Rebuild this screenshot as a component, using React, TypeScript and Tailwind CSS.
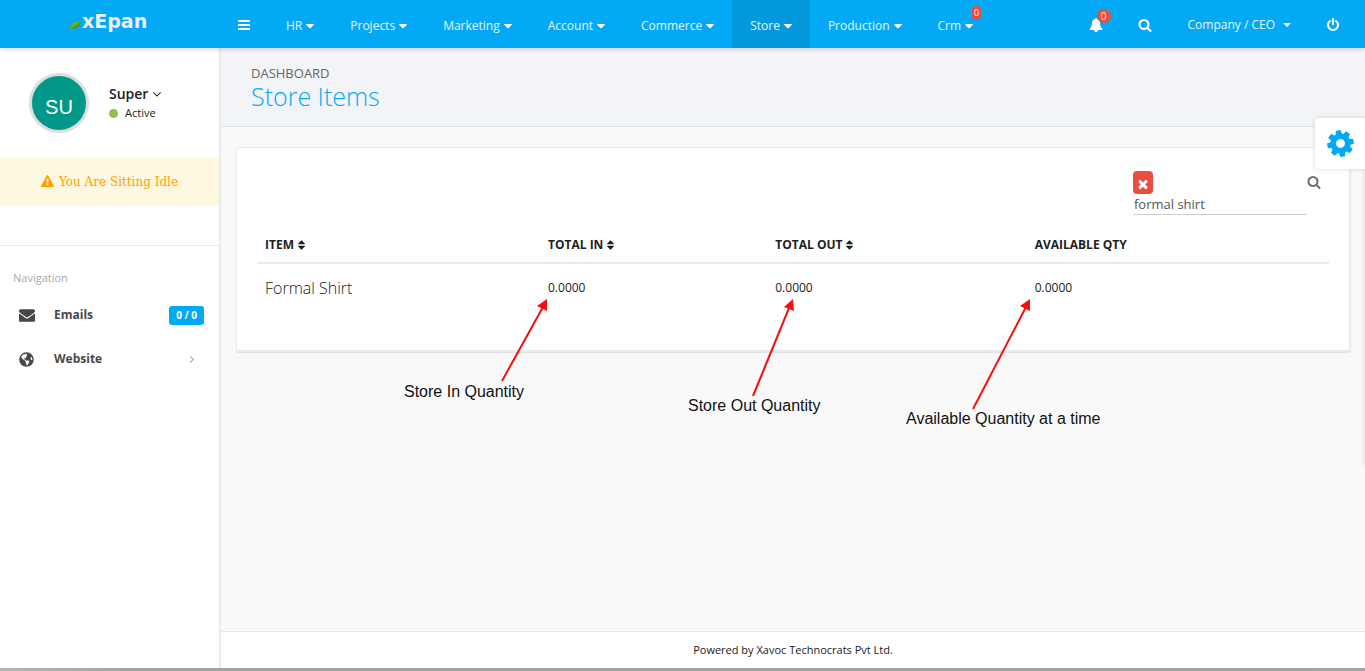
import type { ReactNode } from "react";
import { FaGlobeAmericas } from "react-icons/fa";

const glyphs = {
  bars: "M1664 1344v128q0 26-19 45t-45 19h-1408q-26 0-45-19t-19-45v-128q0-26 19-45t45-19h1408q26 0 45 19t19 45zm0-512v128q0 26-19 45t-45 19h-1408q-26 0-45-19t-19-45v-128q0-26 19-45t45-19h1408q26 0 45 19t19 45zm0-512v128q0 26-19 45t-45 19h-1408q-26 0-45-19t-19-45v-128q0-26 19-45t45-19h1408q26 0 45 19t19 45z",
  caret: "M1408 704q0 26-19 45l-448 448q-19 19-45 19t-45-19l-448-448q-19-19-19-45t19-45 45-19h896q26 0 45 19t19 45z",
  bell: "M912 1696q0-16-16-16-59 0-101.5-42.5t-42.5-101.5q0-16-16-16t-16 16q0 73 51.5 124.5t124.5 51.5q16 0 16-16zm816-288q0 52-38 90t-90 38h-448q0 106-75 181t-181 75-181-75-75-181h-448q-52 0-90-38t-38-90q50-42 91-88t85-119.5 74.5-158.5 50-206 19.5-260q0-152 117-282.5t307-158.5q-8-19-8-39 0-40 28-68t68-28 68 28 28 68q0 20-8 39 190 28 307 158.5t117 282.5q0 139 19.5 260t50 206 74.5 158.5 85 119.5 91 88z",
  search: "M1216 832q0-185-131.5-316.5t-316.5-131.5-316.5 131.5-131.5 316.5 131.5 316.5 316.5 131.5 316.5-131.5 131.5-316.5zm512 832q0 52-38 90t-90 38q-54 0-90-38l-343-342q-179 124-399 124-143 0-273.5-55.5t-225-150-150-225-55.5-273.5 55.5-273.5 150-225 225-150 273.5-55.5 273.5 55.5 225 150 150 225 55.5 273.5q0 220-124 399l343 343q37 37 37 90z",
  power: "M1664 896q0 156-61 298t-164 245-245 164-298 61-298-61-245-164-164-245-61-298q0-182 80.5-343t226.5-270q43-32 95.5-25t83.5 50q32 42 24.5 94.5t-49.5 84.5q-98 74-151.5 181t-53.5 228q0 104 40.5 198.5t109.5 163.5 163.5 109.5 198.5 40.5 198.5-40.5 163.5-109.5 109.5-163.5 40.5-198.5q0-121-53.5-228t-151.5-181q-42-32-49.5-84.5t24.5-94.5q31-43 84-50t95 25q146 109 226.5 270t80.5 343zm-640-768v640q0 52-38 90t-90 38-90-38-38-90v-640q0-52 38-90t90-38 90 38 38 90z",
  cog: "M1152 896q0-106-75-181t-181-75-181 75-75 181 75 181 181 75 181-75 75-181zm512-109v222q0 12-8 23t-20 13l-185 28q-19 54-39 91 35 50 107 138 10 12 10 25t-9 23q-27 37-99 108t-94 71q-12 0-26-9l-138-108q-44 23-91 38-16 136-29 186-7 28-36 28h-222q-14 0-24.5-8.5t-11.5-21.5l-28-184q-49-16-90-37l-141 107q-10 9-25 9-14 0-25-11-126-114-165-168-7-10-7-23 0-12 8-23 15-21 51-66.5t54-70.5q-27-50-41-99l-183-27q-13-2-21-12.5t-8-23.5v-222q0-12 8-23t19-13l186-28q14-46 39-92-40-57-107-138-10-12-10-24 0-10 9-23 26-36 98.5-107.5t94.5-71.5q13 0 26 10l138 107q44-23 91-38 16-136 29-186 7-28 36-28h222q14 0 24.5 8.5t11.5 21.5l28 184q49 16 90 37l142-107q9-9 24-9 13 0 25 10 129 119 165 170 7 8 7 22 0 12-8 23-15 21-51 66.5t-54 70.5q26 50 41 98l183 28q13 2 21 12.5t8 23.5z",
  envelope: "M1792 710v794q0 66-47 113t-113 47h-1472q-66 0-113-47t-47-113v-794q44 49 101 87 362 246 497 345 57 42 92.5 65.5t94.5 48 110 24.5h2q51 0 110-24.5t94.5-48 92.5-65.5q170-123 498-345 57-39 100-87zm0-294q0 79-49 151t-122 123q-376 261-468 325-10 7-42.5 31t-54 38.5-52 32.5-57.5 27-50 9h-2q-23 0-50-9t-57.5-27-52-32.5-54-38.5-42.5-31q-91-64-262-182.5t-205-142.5q-62-42-117-115.5t-55-136.5q0-78 41.5-130t118.5-52h1472q65 0 112.5 47t47.5 113z",
  warning: "M1024 1375v-190q0-14-9.5-23.5t-22.5-9.5h-192q-13 0-22.5 9.5t-9.5 23.5v190q0 14 9.5 23.5t22.5 9.5h192q13 0 22.5-9.5t9.5-23.5zm-2-374l18-459q0-12-10-19-13-11-24-11h-220q-11 0-24 11-10 7-10 21l17 457q0 10 10 16.5t24 6.5h185q14 0 23.5-6.5t10.5-16.5zm-14-934l768 1408q35 63-2 126-17 29-46.5 46t-63.5 17h-1536q-34 0-63.5-17t-46.5-46q-37-63-2-126l768-1408q17-31 47-49t65-18 65 18 47 49z",
  times: "M1490 1322q0 40-28 68l-136 136q-28 28-68 28t-68-28l-294-294-294 294q-28 28-68 28t-68-28l-136-136q-28-28-28-68t28-68l294-294-294-294q-28-28-28-68t28-68l136-136q28-28 68-28t68 28l294 294 294-294q28-28 68-28t68 28l136 136q28 28 28 68t-28 68l-294 294 294 294q28 28 28 68z",
  angleRight: "M1171 960q0 13-10 23l-466 466q-10 10-23 10t-23-10l-50-50q-10-10-10-23t10-23l393-393-393-393q-10-10-10-23t10-23l50-50q10-10 23-10t23 10l466 466q10 10 10 23z",
  angleDown: "M1395 736q0 13-10 23l-466 466q-10 10-23 10t-23-10l-466-466q-10-10-10-23t10-23l50-50q10-10 23-10t23 10l393 393 393-393q10-10 23-10t23 10l50 50q10 10 10 23z",
  sort: "M1408 1088q0 26-19 45l-448 448q-19 19-45 19t-45-19l-448-448q-19-19-19-45t19-45 45-19h896q26 0 45 19t19 45zm0-384q0 26-19 45t-45 19h-896q-26 0-45-19t-19-45 19-45l448-448q19-19 45-19t45 19l448 448q19 19 19 45z",
};

function Glyph({ name, className, box = "0 0 1792 1792" }: { name: keyof typeof glyphs; className: string; box?: string }) {
  return (
    <svg viewBox={box} fill="currentColor" aria-hidden="true" className={className}>
      <path d={glyphs[name]} />
    </svg>
  );
}

const menu = ["HR", "Projects", "Marketing", "Account", "Commerce", "Store", "Production", "Crm"];

function TopBar() {
  return (
    <header className="relative z-10 flex h-12 items-stretch bg-[#03a9f5] text-[12px] text-[#e6f6fe] shadow-[0_1px_5px_rgba(0,0,0,0.18)]">
      <a href="#home" className="flex w-[220px] shrink-0 items-center pb-[6px] pl-[69px]" aria-label="xEpan">
        <svg viewBox="0 0 13 12" className="mt-2 h-3 w-[13px]" aria-hidden="true">
          <path d="M1 10.500C1 5 4 3 11.500 2C12 6 9 10 2.500 9.500L1 11Z" fill="#6fae1c" />
          <path d="M2.500 9C5 8 9 6 11.500 2C12 6 9 10 2.500 9.500Z" fill="#4a9412" />
        </svg>
        <span className="font-['DejaVu_Sans',sans-serif] text-[19px] font-bold leading-6 text-[#f1eef0]">xEpan</span>
      </a>
      <button className="flex w-12 items-center justify-center text-white" aria-label="Toggle menu">
        <Glyph name="bars" className="mt-0.5 size-[14px]" />
      </button>
      <nav className="flex">
        {menu.map((label) => (
          <a
            key={label}
            href={`#${label}`}
            className={`relative flex items-center gap-1 px-[18px] pt-1 ${label === "Store" ? "bg-[#0499dd]" : ""}`}
          >
            {label}
            <Glyph name="caret" box="384 0 1024 1792" className="h-[14px] w-2 text-white" />
            {label === "Crm" && (
              <span className="absolute right-[10px] top-[6px] rounded bg-[#e84e40] px-[2px] text-[9px] leading-[14px]">0</span>
            )}
          </a>
        ))}
      </nav>
      <div className="ml-auto flex items-stretch">
        <button className="relative flex w-12 items-center justify-center text-white" aria-label="Notifications">
          <Glyph name="bell" className="mt-0.5 size-[14px]" />
          <span className="absolute right-[9px] top-[9px] size-[14px] rounded-full bg-[#e84e40] text-center text-[10px] leading-[14px] text-[#fde5e2]">0</span>
        </button>
        <button className="flex w-[50px] items-center justify-center text-white" aria-label="Search">
          <Glyph name="search" className="mt-0.5 size-[14px]" />
        </button>
        <button className="flex items-center gap-2 px-[18px] pt-px">
          Company / CEO
          <span className="border-x-4 border-t-4 border-x-transparent border-t-white" />
        </button>
        <button className="mr-2 flex w-12 items-center justify-center text-white" aria-label="Log out">
          <Glyph name="power" className="mt-px size-[14px]" />
        </button>
      </div>
    </header>
  );
}

function Sidebar() {
  return (
    <aside className="flex w-[221px] shrink-0 flex-col border-r-2 border-[#e7ebee] bg-white">
      <div className="flex h-[110px] items-center gap-5 pl-[29px]">
        <div className="flex size-[60px] items-center justify-center rounded-full border-[3px] border-[#dedede] bg-[#009888] pt-2 font-['Liberation_Sans',sans-serif] text-[20px] text-white">
          SU
        </div>
        <div>
          <button className="flex items-center gap-0.5 text-[14px] font-semibold leading-5 text-[#212121]">
            Super
            <Glyph name="angleDown" className="size-[14px]" />
          </button>
          <div className="flex items-center gap-[7px] text-[11px] leading-[18px] text-[#212121]">
            <span className="size-[9px] rounded-full bg-[#8bc34a]" />
            Active
          </div>
        </div>
      </div>
      <div className="flex h-[47px] items-center justify-center gap-[5px] bg-[#fff8e1] font-['DejaVu_Serif',serif] text-[12px] text-[#ffa000]">
        <Glyph name="warning" className="size-[13px]" />
        You Are Sitting Idle
      </div>
      <div className="h-[41px] border-b border-[#e7ebee]" />
      <h2 className="pl-[13px] pt-[23px] text-[11px] leading-[18px] text-[#aaa]">Navigation</h2>
      <nav className="pt-[6px] text-[12px] font-bold text-[#484848]">
        <a href="#emails" className="flex h-11 items-center pl-[19px] pr-[15px]">
          <Glyph name="envelope" className="mr-[19px] size-4" />
          Emails
          <span className="ml-auto rounded-[3px] bg-[#03a9f5] px-[7px] text-[10px] leading-[19px] text-white">0 / 0</span>
        </a>
        <a href="#website" className="flex h-11 items-center pl-[19px] pr-[21px]">
          <FaGlobeAmericas className="mr-5 size-[15px]" />
          Website
          <Glyph name="angleRight" className="ml-auto size-3 text-[#999]" />
        </a>
      </nav>
    </aside>
  );
}

function Heading({ children }: { children: ReactNode }) {
  return (
    <button className="flex items-center gap-1 font-bold">
      {children}
      <Glyph name="sort" box="384 0 1024 1792" className="h-3 w-[7px]" />
    </button>
  );
}

function ItemsCard() {
  return (
    <section className="ml-[15px] mr-[14px] mt-5 rounded-[3px] border border-b-2 border-r-2 border-[#e7ebee] bg-white px-5 pb-[39px] pt-[23px] shadow-[0_1px_1px_rgba(0,0,0,0.1)]">
      <form className="flex justify-end pr-2">
        <div className="flex w-[174px] flex-col items-start">
          <button type="button" aria-label="Clear search" className="flex h-[23px] w-5 items-center justify-center rounded bg-[#e84e40] text-white">
            <Glyph name="times" className="mt-[2px] size-[14px]" />
          </button>
          <input
            aria-label="Search items"
            defaultValue="formal shirt"
            className="h-[21px] w-full border-b border-[#ccc] px-px text-[13px] text-[#555] outline-none"
          />
        </div>
        <button type="button" aria-label="Search" className="mt-1 self-start text-[#707070]">
          <Glyph name="search" className="size-[14px]" />
        </button>
      </form>
      <table className="mt-[13px] w-full table-fixed text-left text-[12px] text-[#212121]">
        <thead>
          <tr className="h-[35px] border-b-2 border-[#e7ebee]">
            <th className="w-[26.4%] px-2"><Heading>ITEM</Heading></th>
            <th className="w-[21.2%] px-2"><Heading>TOTAL IN</Heading></th>
            <th className="w-[24.2%] px-2"><Heading>TOTAL OUT</Heading></th>
            <th className="px-2">AVAILABLE QTY</th>
          </tr>
        </thead>
        <tbody>
          <tr className="h-12">
            <td className="px-2 text-[16px] font-light">Formal Shirt</td>
            <td className="px-2">0.0000</td>
            <td className="px-2">0.0000</td>
            <td className="px-2">0.0000</td>
          </tr>
        </tbody>
      </table>
    </section>
  );
}

function Callouts() {
  return (
    <div className="pointer-events-none absolute inset-0 font-['Liberation_Sans',sans-serif] text-[16px] leading-5 text-[#111]">
      <svg className="absolute left-0 top-0" width="1144" height="420" aria-hidden="true">
        <g stroke="#fb0d0d" strokeWidth="2" fill="#fb0d0d">
          <path d="M281 333L322 259M532 348L568 260M752 361L805 259" />
          <g stroke="none">
            <path d="M326 251L316 258L326 263Z" />
            <path d="M572 251L563 259L573 263Z" />
            <path d="M809 251L799 258L809 263Z" />
          </g>
        </g>
      </svg>
      <span className="absolute left-[183px] top-[334px]">Store In Quantity</span>
      <span className="absolute left-[467px] top-[348px]">Store Out Quantity</span>
      <span className="absolute left-[685px] top-[361px]">Available Quantity at a time</span>
    </div>
  );
}

export default function App() {
  return (
    <div className="relative flex min-h-screen flex-col overflow-hidden bg-white font-['Open_Sans',sans-serif]">
      <TopBar />
      <div className="flex flex-1">
        <Sidebar />
        <main className="relative flex min-w-0 flex-1 flex-col bg-[#f9f9f9]">
          <div className="h-[79px] border-b border-[#dfe2e6] bg-[#f3f4f7] pl-[30px] pt-4">
            <p className="text-[13px] leading-[18px] text-[#666]">DASHBOARD</p>
            <h1 className="text-[25px] font-light leading-7 text-[#03a9f5]">Store Items</h1>
          </div>
          <ItemsCard />
          <footer className="mt-auto flex h-[37px] items-center justify-center border-t border-[#e7e9eb] bg-white text-[11px] text-[#212121]">
            Powered by Xavoc Technocrats Pvt Ltd.
          </footer>
          <Callouts />
        </main>
      </div>
      <div className="h-[3px] bg-linear-to-r from-[#b5b3b9] via-[#a2a2a6] via-10% to-[#a2a4a8]" />
      <div className="absolute -right-2 top-[118px] h-[348px] w-2 shadow-[0_0_5px_rgba(0,0,0,0.15)]" />
      <button aria-label="Settings" className="absolute right-0 top-[118px] flex h-[51px] w-[50px] items-center justify-center rounded-l-[3px] bg-white text-[#03a9f5] shadow-[0_0_5px_rgba(0,0,0,0.15)]">
        <Glyph name="cog" className="size-[31px] -rotate-10" />
      </button>
    </div>
  );
}
